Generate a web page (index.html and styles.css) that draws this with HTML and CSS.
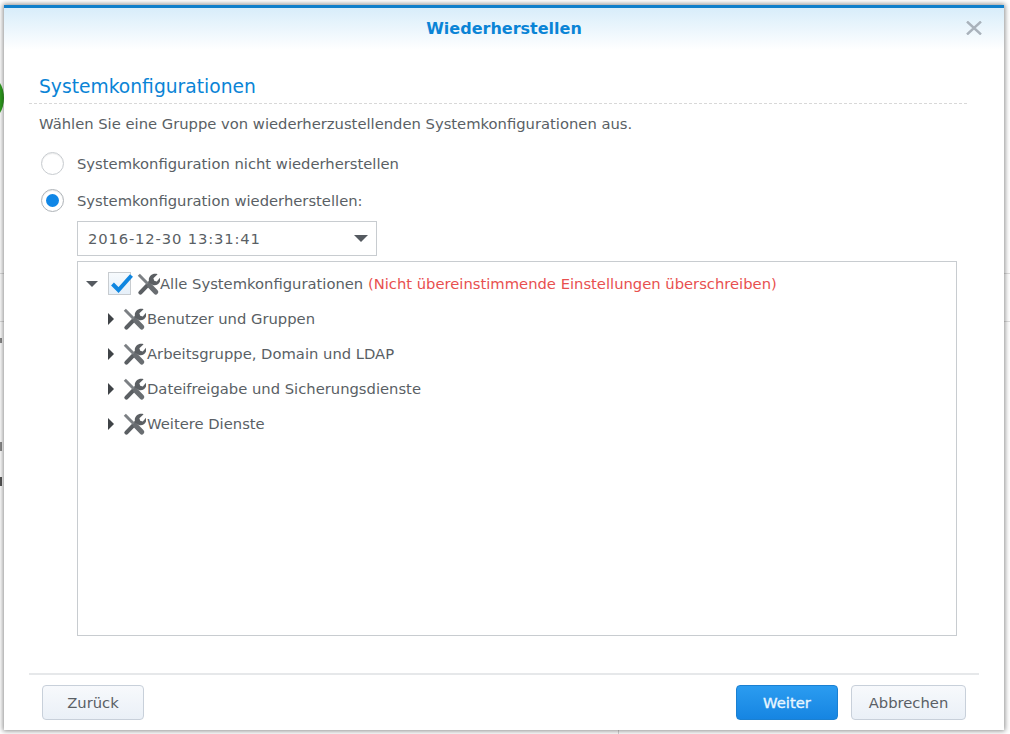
FILE: index.html
```html
<!DOCTYPE html>
<html lang="de">
<head>
  <meta charset="UTF-8" />
  <title>Wiederherstellen</title>
  <link rel="stylesheet" href="styles.css">
</head>
<body>
  <!-- what shows of the page behind the dialog -->
  <div class="behind-dot"></div>
  <div class="behind-line behind-line-1"></div>
  <div class="behind-line behind-line-2"></div>
  <div class="behind-rule"></div>
  <div class="behind-mark behind-mark-1"></div>
  <div class="behind-mark behind-mark-2"></div>
  <div class="behind-mark behind-mark-3"></div>

  <div class="dialog">
    <header class="dialog-head">
      <h1>Wiederherstellen</h1>
      <svg class="close" width="16" height="14" viewBox="0 0 16 14"><path d="M1 .5 15 13.5M15 .5 1 13.5" stroke="#a9b2bb" stroke-width="2.4" fill="none"/></svg>
    </header>

    <main class="dialog-body">
      <h2>Systemkonfigurationen</h2>
      <p class="intro">Wählen Sie eine Gruppe von wiederherzustellenden Systemkonfigurationen aus.</p>

      <div class="radio-row">
        <span class="radio"></span>
        <span>Systemkonfiguration nicht wiederherstellen</span>
      </div>
      <div class="radio-row">
        <span class="radio radio-on"></span>
        <span>Systemkonfiguration wiederherstellen:</span>
      </div>

      <div class="select">
        <span class="select-value">2016-12-30 13:31:41</span>
        <span class="select-arrow"></span>
      </div>

      <div class="tree">
        <div class="tree-row">
          <span class="arrow-down"></span>
          <span class="check">
            <svg width="25" height="22" viewBox="0 0 25 22"><path d="M3.5 11 9.5 17 22.5 2.5" stroke="#0f86e0" stroke-width="4" fill="none"/></svg>
          </span>
          <svg class="tool" width="24" height="24" viewBox="0 0 24 24"><use href="#tools"/></svg>
          <span>Alle Systemkonfigurationen <span class="warn">(Nicht übereinstimmende Einstellungen überschreiben)</span></span>
        </div>
        <div class="tree-row tree-child">
          <span class="arrow-right"></span>
          <svg class="tool" width="24" height="24" viewBox="0 0 24 24"><use href="#tools"/></svg>
          <span>Benutzer und Gruppen</span>
        </div>
        <div class="tree-row tree-child">
          <span class="arrow-right"></span>
          <svg class="tool" width="24" height="24" viewBox="0 0 24 24"><use href="#tools"/></svg>
          <span>Arbeitsgruppe, Domain und LDAP</span>
        </div>
        <div class="tree-row tree-child">
          <span class="arrow-right"></span>
          <svg class="tool" width="24" height="24" viewBox="0 0 24 24"><use href="#tools"/></svg>
          <span>Dateifreigabe und Sicherungsdienste</span>
        </div>
        <div class="tree-row tree-child">
          <span class="arrow-right"></span>
          <svg class="tool" width="24" height="24" viewBox="0 0 24 24"><use href="#tools"/></svg>
          <span>Weitere Dienste</span>
        </div>
      </div>
    </main>

    <footer class="dialog-foot">
      <button class="btn btn-back">Zurück</button>
      <button class="btn btn-next">Weiter</button>
      <button class="btn btn-cancel">Abbrechen</button>
    </footer>
  </div>

  <svg class="defs" width="0" height="0">
    <defs>
      <g id="tools">
        <path d="M4.4 20.6 15 9.6" stroke="#5b5f63" stroke-width="4.2" stroke-linecap="round" fill="none"/>
        <path d="M13 9.4C11.8 4.6 16.4.6 21.6 2.2L17.4 6.2 18.2 8.8 20.8 9.6 24.2 5.6C25.4 10.8 20.8 14.6 16.6 13Z" fill="#5b5f63"/>
        <path d="M2.8 2.8 12 12" stroke="#7c8084" stroke-width="3" fill="none"/>
        <path d="M13.5 13.5 19.8 20" stroke="#696d71" stroke-width="5" stroke-linecap="round" fill="none"/>
      </g>
    </defs>
  </svg>
</body>
</html>
```

FILE: styles.css
```css
html, body {
  height: 100%;
}
body {
  margin: 0;
  padding: 5px 6px 4px 4px;
  box-sizing: border-box;
  background-color: #ffffff;
  font-family: "DejaVu Sans", sans-serif;
  font-size: 14.75px;
  color: #5a5f65;
  overflow: hidden;
}
.defs {
  position: absolute;
}
.behind-dot {
  position: absolute;
  left: -26px;
  top: 76px;
  width: 30px;
  height: 44px;
  border-radius: 50%;
  background-color: #2f9e1f;
}
.behind-line {
  position: absolute;
  left: 0;
  right: 0;
  height: 1px;
  background-color: #dddddd;
}
.behind-line-1 {
  top: 273px;
}
.behind-line-2 {
  top: 321px;
}
.behind-rule {
  position: absolute;
  left: 618px;
  bottom: 0;
  width: 1px;
  height: 4px;
  background-color: #d5d5d5;
}
.behind-mark {
  position: absolute;
  left: 0;
  width: 2px;
  background-color: #8a8a8a;
}
.behind-mark-1 {
  top: 338px;
  height: 5px;
}
.behind-mark-2 {
  top: 442px;
  height: 9px;
}
.behind-mark-3 {
  top: 477px;
  height: 9px;
  background-color: #555555;
}
.dialog {
  position: relative;
  height: 725px;
  display: flex;
  flex-direction: column;
  background-color: #ffffff;
  border-top: 3px solid #0f7fcb;
  box-sizing: border-box;
  box-shadow: 0 0 5px 1px rgba(0, 0, 0, 0.45);
}
.dialog-head {
  height: 42px;
  box-sizing: border-box;
  padding-bottom: 2px;
  display: flex;
  align-items: center;
  justify-content: center;
  position: relative;
  background: linear-gradient(#d8edfa, #ffffff);
}
.dialog-head h1 {
  margin: 0;
  font-size: 16px;
  font-weight: bold;
  color: #0a84d6;
}
.close {
  position: absolute;
  right: 22px;
  top: 13px;
}
.dialog-body {
  flex: 1;
  padding: 22px 37px 0 35px;
}
.dialog-body h2 {
  margin: 0 0 0 -10px;
  padding: 0 0 2px 10px;
  font-size: 18.7px;
  font-weight: normal;
  color: #0a84d6;
  border-bottom: 1px dashed #d8d8d8;
  line-height: 29px;
}
.intro {
  margin: 11px 0 0 0;
  line-height: 18px;
}
.radio-row {
  display: flex;
  align-items: center;
  gap: 13px;
  height: 24px;
  margin-top: 18px;
  padding-left: 2px;
}
.radio-row + .radio-row {
  margin-top: 13px;
}
.radio {
  width: 21px;
  height: 21px;
  border: 1px solid #c8ccd0;
  border-radius: 50%;
  background-color: #ffffff;
  box-shadow: inset 0 1px 1px rgba(0, 0, 0, 0.08);
  position: relative;
}
.radio-on {
  border-color: #aeb3b8;
}
.radio-on::after {
  content: "";
  position: absolute;
  left: 4px;
  top: 4px;
  width: 13px;
  height: 13px;
  border-radius: 50%;
  background-color: #0f86e6;
}
.select {
  width: 300px;
  height: 35px;
  box-sizing: border-box;
  margin: 9px 0 5px 38px;
  padding: 0 8px 0 10px;
  border: 1px solid #c8ccd0;
  display: flex;
  align-items: center;
  justify-content: space-between;
}
.select-value {
  letter-spacing: 0.85px;
}
.select-arrow {
  width: 0;
  height: 0;
  border-left: 7px solid transparent;
  border-right: 7px solid transparent;
  border-top: 7px solid #555a60;
}
.tree {
  width: 880px;
  height: 375px;
  box-sizing: border-box;
  margin-left: 38px;
  border: 1px solid #c8ccd0;
  padding-top: 4px;
}
.tree-row {
  display: flex;
  align-items: center;
  height: 35px;
  padding-left: 8px;
}
.tree-child {
  padding-left: 30px;
}
.arrow-down {
  width: 0;
  height: 0;
  border-left: 6px solid transparent;
  border-right: 6px solid transparent;
  border-top: 6px solid #555a60;
  margin-right: 10px;
}
.arrow-right {
  width: 0;
  height: 0;
  border-top: 6px solid transparent;
  border-bottom: 6px solid transparent;
  border-left: 6px solid #3f4347;
  margin-right: 10px;
}
.check {
  width: 23px;
  height: 23px;
  box-sizing: border-box;
  border: 1px solid #c8ccd0;
  background: linear-gradient(#f7fafd, #e6f0f9);
  position: relative;
  margin-right: 5px;
}
.check svg {
  position: absolute;
  left: 0;
  top: 0;
}
.tool {
  flex: none;
}
.tree-child .tool {
  margin: 0 1px 0 -2px;
}
.warn {
  color: #e8504f;
}
.dialog-foot {
  margin: 0 25px;
  height: 45px;
  border-top: 2px solid #e6e8ea;
  display: flex;
  align-items: flex-start;
  gap: 13px;
  padding: 10px 13px 0 13px;
}
.btn {
  height: 35px;
  box-sizing: border-box;
  border-radius: 4px;
  font-family: inherit;
  font-size: 14.75px;
  padding: 0;
  border: 1px solid #c8d0da;
  background: linear-gradient(#f7f9fc, #eaf0f7);
  color: #5a5f65;
}
.btn-back {
  width: 102px;
  margin-right: auto;
}
.btn-next {
  width: 102px;
  border-color: #1a80d2;
  background: linear-gradient(#2b9cf0, #1685e2);
  color: #e8f6ff;
  -webkit-text-stroke: 0.35px #e8f6ff;
}
.btn-cancel {
  width: 115px;
}
```
